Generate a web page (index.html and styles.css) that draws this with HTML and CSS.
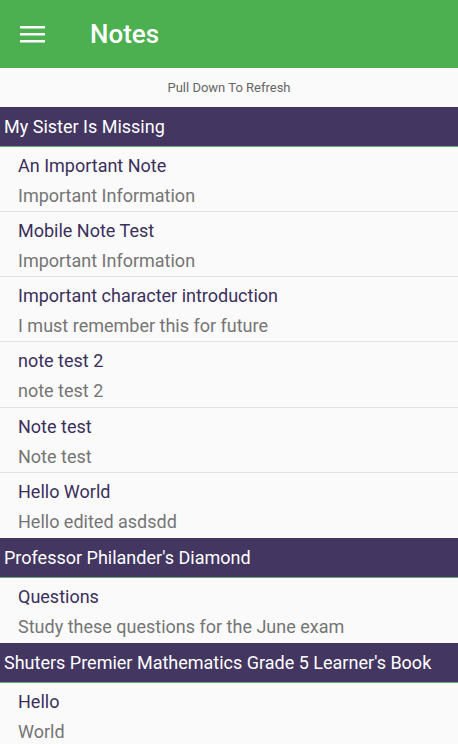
FILE: index.html
```html
<!DOCTYPE html>
<html>
<head>
<meta charset="utf-8">
<link rel="stylesheet" href="styles.css">
</head>
<body>
<header class="toolbar">
  <svg class="menu" width="26" height="20" viewBox="0 0 26 20">
    <rect x="0" y="3" width="25" height="2.5" fill="#fff"/>
    <rect x="0" y="10" width="25" height="2.5" fill="#fff"/>
    <rect x="0" y="17" width="25" height="2.5" fill="#fff"/>
  </svg>
  <span class="title">Notes</span>
</header>
<div class="refresh">Pull Down To Refresh</div>

<div class="section">My Sister Is Missing</div>
<div class="item"><div class="t">An Important Note</div><div class="s">Important Information</div></div>
<div class="item"><div class="t">Mobile Note Test</div><div class="s">Important Information</div></div>
<div class="item"><div class="t">Important character introduction</div><div class="s">I must remember this for future</div></div>
<div class="item"><div class="t">note test 2</div><div class="s">note test 2</div></div>
<div class="item"><div class="t">Note test</div><div class="s">Note test</div></div>
<div class="item last"><div class="t">Hello World</div><div class="s">Hello edited asdsdd</div></div>

<div class="section">Professor Philander's Diamond</div>
<div class="item last"><div class="t">Questions</div><div class="s">Study these questions for the June exam</div></div>

<div class="section">Shuters Premier Mathematics Grade 5 Learner's Book</div>
<div class="item last"><div class="t">Hello</div><div class="s">World</div></div>
</body>
</html>
```
FILE: styles.css
```css
html, body {
  margin: 0;
  padding: 0;
  background: #fafafa;
  font-family: Roboto, "Noto Sans", sans-serif;
  overflow: hidden;
}
.toolbar {
  height: 68px;
  background: #4caf50;
  display: flex;
  align-items: center;
  box-sizing: border-box;
  padding-left: 20px;
}
.menu {
  display: block;
  margin-top: -2px;
}
.title {
  color: #fff;
  font-size: 26px;
  font-weight: 500;
  margin-left: 44px;
  margin-top: -1px;
}
.refresh {
  height: 39px;
  display: flex;
  align-items: center;
  justify-content: center;
  font-size: 13px;
  color: #666;
  padding-left: 0;
}
.section {
  height: 39.5px;
  box-sizing: border-box;
  background: #433660;
  color: #fff;
  font-size: 18px;
  display: flex;
  align-items: center;
  padding-left: 4px;
  border-bottom: 1px solid #6aa87a;
  white-space: nowrap;
}
.item {
  height: 65.33px;
  box-sizing: border-box;
  padding: 7px 18px 0;
  border-bottom: 1px solid #e2e2e2;
}
.item.last {
  border-bottom: none;
}
.t {
  color: #3a2f5c;
  font-size: 18px;
  line-height: 24px;
}
.s {
  color: #757575;
  font-size: 18px;
  line-height: 24px;
  margin-top: 6px;
}
```
